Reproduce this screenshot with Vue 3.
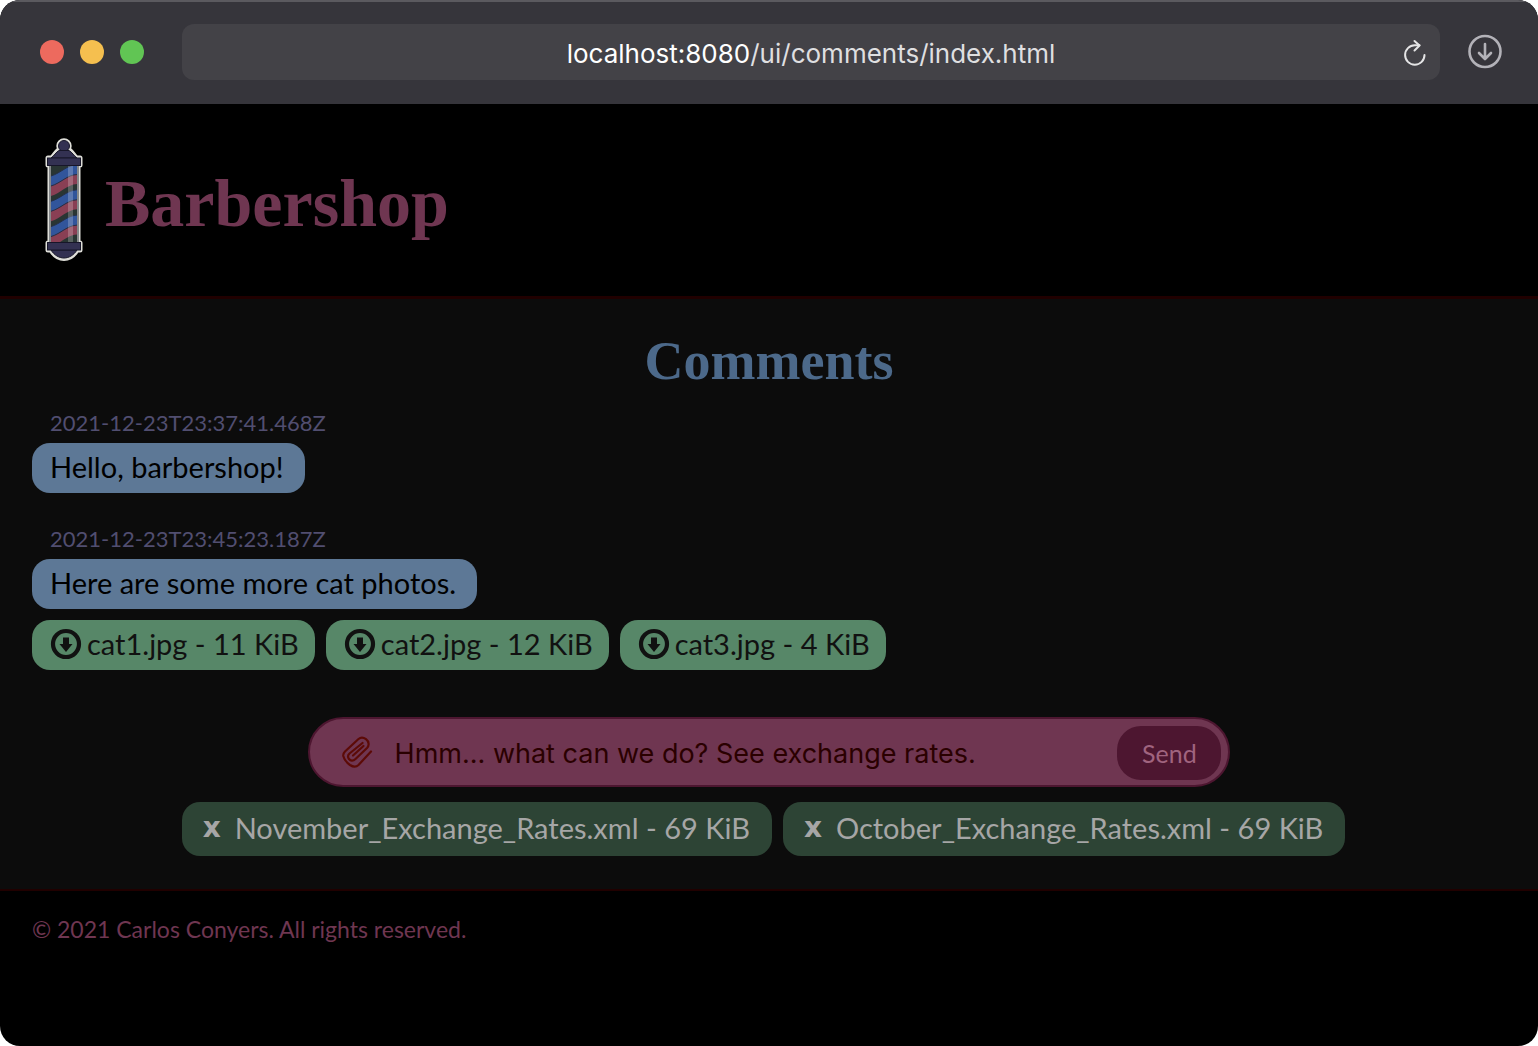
<script setup>
import { ref } from 'vue'

const comments = [
  { time: '2021-12-23T23:37:41.468Z', text: 'Hello, barbershop!', files: [] },
  {
    time: '2021-12-23T23:45:23.187Z',
    text: 'Here are some more cat photos.',
    files: ['cat1.jpg - 11 KiB', 'cat2.jpg - 12 KiB', 'cat3.jpg - 4 KiB'],
  },
]

const draft = ref('Hmm... what can we do? See exchange rates.')
const attachments = ref([
  'November_Exchange_Rates.xml - 69 KiB',
  'October_Exchange_Rates.xml - 69 KiB',
])
const stripes = [0, 1, 2]

function detach(index) {
  attachments.value.splice(index, 1)
}
</script>

<template>
  <div class="window">
    <div class="toolbar">
      <div class="lights">
        <span class="light close"></span>
        <span class="light minimize"></span>
        <span class="light expand"></span>
      </div>
      <div class="address">
        <span class="url"><span class="host">localhost:8080</span>/ui/comments/index.html</span>
        <button class="icon-button reload" type="button" aria-label="Reload">
          <svg width="24" height="28" viewBox="0 0 24 28" fill="none" stroke="currentColor" stroke-width="2" stroke-linecap="round" stroke-linejoin="round">
            <path d="M21.500 16A9.700 9.700 0 1 1 11.800 6.300H16.500" />
            <path d="M11.500 2L16.500 6.500L11.500 11.500" />
          </svg>
        </button>
      </div>
      <button class="icon-button downloads" type="button" aria-label="Downloads">
        <svg width="36" height="36" viewBox="0 0 36 36" fill="none" stroke="currentColor" stroke-width="2.600" stroke-linecap="round" stroke-linejoin="round">
          <circle cx="18" cy="17.500" r="15.500" />
          <path d="M18 10V24.500M12 19L18 25L24 19" />
        </svg>
      </button>
    </div>

    <header class="site-header">
      <svg class="logo" width="64" height="128" viewBox="0 0 64 128" aria-hidden="true">
        <defs>
          <clipPath id="tube"><rect x="19" y="29" width="26" height="78" /></clipPath>
        </defs>
        <g fill="#deded8" stroke="#deded8" stroke-width="5" stroke-linejoin="round">
          <circle cx="32" cy="10" r="5.200" />
          <path d="M19 22C22 21 24 15 27 14H37C40 15 42 21 45 22H48V29H46V107H48V114H45C42 119 37 122.500 32 122.500S22 119 19 114H16V107H18V29H16V22Z" />
        </g>
        <rect x="17" y="29" width="30" height="78" fill="#85888a" />
        <rect x="19" y="29" width="26" height="78" fill="#293533" />
        <g clip-path="url(#tube)">
          <g v-for="i in stripes" :key="i" :transform="`translate(0 ${i * 25.3})`">
            <path d="M19 40C29 37 35 29 45 28.500V38.500C35 39 29 47 19 50Z" fill="#31559b" />
            <path d="M19 50C29 47 35 39 45 38.500V48C35 48.500 29 57 19 60Z" fill="#893f54" />
            <path d="M19 40C29 37 35 29 45 28.500M19 50C29 47 35 39 45 38.500" fill="none" stroke="#263047" stroke-width="1" />
          </g>
          <rect x="36" y="29" width="5" height="78" fill="#fff" opacity=".22" />
        </g>
        <g fill="#333152" stroke="#171629" stroke-width="1">
          <circle cx="32" cy="10" r="5.500" />
          <path d="M19 22C22 20 24 16 27 14.500H37C40 16 42 20 45 22Z" />
          <path d="M19 114C22 119 27 122 32 122S42 119 45 114Z" />
          <rect x="15.500" y="22" width="33" height="7.500" />
          <rect x="15.500" y="106.500" width="33" height="7.500" />
        </g>
      </svg>
      <span class="brand">Barbershop</span>
    </header>

    <main class="content">
      <h1 class="heading">Comments</h1>

      <div class="comments">
        <article v-for="comment in comments" :key="comment.time" class="comment">
          <time class="stamp" :datetime="comment.time">{{ comment.time }}</time>
          <p class="bubble">{{ comment.text }}</p>
          <div v-if="comment.files.length" class="files">
            <a v-for="file in comment.files" :key="file" class="file" href="#">
              <svg width="32" height="32" viewBox="0 0 32 32" aria-hidden="true">
                <circle cx="16" cy="16" r="13" fill="none" stroke="currentColor" stroke-width="4.200" />
                <path d="M13 9.500H19V16H22.500L16 24L9.500 16H13Z" fill="currentColor" />
              </svg>
              <span>{{ file }}</span>
            </a>
          </div>
        </article>
      </div>

      <form class="composer" @submit.prevent>
        <button class="icon-button attach" type="button" aria-label="Attach a file">
          <svg width="32" height="34" viewBox="0 0 32 34" fill="none" stroke="currentColor" stroke-width="2.200" stroke-linecap="round" stroke-linejoin="round">
            <path d="M30 15.500L17.500 29C15 31.500 12 31 9 29C5.500 26.500 3 23 2.300 20C2 18 2.500 17 4 15.500L17.500 3C19.500 1.200 22.500 1.200 25 3.200C28 5.500 28.500 9.500 26 12L14.500 23C12 25.300 9.500 25 8 23C6.500 21 7 19 8.500 17.500L21.500 7" />
            <path d="M22.500 10L12 19.500" />
          </svg>
        </button>
        <input v-model="draft" class="draft" type="text" aria-label="Comment" />
        <button class="send" type="submit">Send</button>
      </form>

      <div class="attachments">
        <div v-for="(file, index) in attachments" :key="file" class="attachment">
          <button class="remove" type="button" :aria-label="`Remove ${file}`" @click="detach(index)">x</button>
          <span>{{ file }}</span>
        </div>
      </div>
    </main>

    <footer class="site-footer">© 2021 Carlos Conyers. All rights reserved.</footer>
  </div>
</template>

<style>
body {
  background: #fff;
}
</style>

<style scoped>
* {
  box-sizing: border-box;
}

.window {
  display: flex;
  flex-direction: column;
  min-height: 100vh;
  overflow: hidden;
  border-radius: 20px;
  background: #000;
  font-family: Lato, "Open Sans", sans-serif;
  font-size: 29px;
}

button {
  padding: 0;
  border: 0;
  background: none;
  font: inherit;
}

svg {
  display: block;
  flex: none;
}

.icon-button {
  display: block;
  flex: none;
}

.toolbar {
  display: flex;
  align-items: center;
  height: 104px;
  padding: 0 35px 2px 40px;
  border-top: 2px solid #5b5a5f;
  background: #36353b;
}

.lights {
  display: flex;
  gap: 16px;
}

.light {
  width: 24px;
  height: 24px;
  border-radius: 50%;
}

.close {
  background: #ed6a5e;
}

.minimize {
  background: #f5bf4f;
}

.expand {
  background: #61c554;
}

.address {
  display: flex;
  flex: 1;
  align-items: center;
  height: 56px;
  margin: 0 27px 0 38px;
  padding: 2px 13px 0 37px;
  border-radius: 12px;
  background: #434247;
}

.url {
  flex: 1;
  color: #dfdfe0;
  font-family: Inter, sans-serif;
  font-size: 26px;
  text-align: center;
}

.host {
  color: #fff;
}

.reload {
  color: #e4e4e5;
}

.downloads {
  color: #b3b2b8;
}

.site-header {
  display: flex;
  align-items: center;
  gap: 9px;
  padding: 32px;
  border-bottom: 3px solid #200000;
}

.brand {
  padding-top: 6px;
  color: #6f3651;
  font: bold 68px/80px "Liberation Serif", serif;
}

.content {
  padding: 32px 32px 33px;
  border-bottom: 2px solid #200000;
  background: #0c0c0c;
}

.heading {
  margin: 0 0 12px;
  color: #4c698a;
  font: bold 54px/60px "Liberation Serif", serif;
  text-align: center;
}

.comments {
  display: flex;
  flex-direction: column;
  gap: 26px;
}

.comment {
  display: flex;
  flex-direction: column;
  align-items: flex-start;
}

.stamp {
  padding: 0 18px;
  color: #514e70;
  font-size: 22px;
  line-height: 40px;
}

.bubble,
.file {
  margin: 0;
  padding: 0 21px 2px 18px;
  border-radius: 18px;
  line-height: 48px;
}

.bubble {
  background: #5d7896;
  color: #000;
}

.files,
.attachments {
  display: flex;
  flex-wrap: wrap;
  gap: 11px;
}

.files {
  margin-top: 11px;
}

.file {
  display: flex;
  align-items: center;
  gap: 5px;
  padding-right: 16px;
  background: #578768;
  color: #111;
  text-decoration: none;
}

.composer {
  display: flex;
  align-items: center;
  width: 60vw;
  height: 70px;
  margin: 47px auto 15px;
  padding: 2px 7px 0 31px;
  border: 2px solid #4d1630;
  border-radius: 35px;
  background: #6f3651;
}

.attach {
  color: #5c0a06;
}

.draft {
  flex: 1;
  min-width: 0;
  height: 54px;
  padding: 0 22px;
  border: 0;
  outline: 0;
  background: none;
  color: #2a0000;
  font: 27px Inter, sans-serif;
}

.send {
  width: 104px;
  height: 54px;
  border-radius: 24px;
  background: #4d1630;
  color: #a0647f;
  font-size: 25px;
}

.attachments {
  justify-content: center;
  padding-right: 11px;
}

.attachment {
  display: flex;
  align-items: center;
  gap: 13px;
  height: 54px;
  padding: 0 22px 3px 20px;
  border-radius: 18px;
  background: #2d4435;
  color: #a6a6a6;
}

.remove {
  width: 20px;
  color: inherit;
  font: bold 28px "DejaVu Sans", sans-serif;
}

.site-footer {
  padding: 23px 32px;
  color: #6f3651;
  font-size: 23px;
  line-height: 30px;
}
</style>
